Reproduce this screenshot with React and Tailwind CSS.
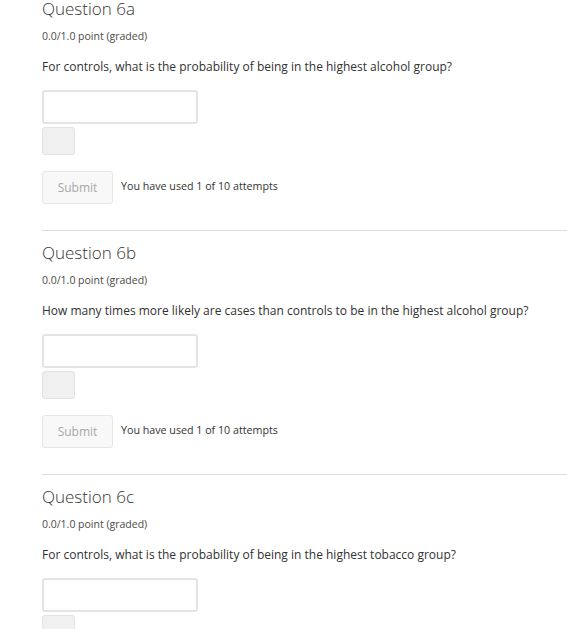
import React from "react";

const questions = [
  { id: "6a", text: "For controls, what is the probability of being in the highest alcohol group?" },
  { id: "6b", text: "How many times more likely are cases than controls to be in the highest alcohol group?" },
  { id: "6c", text: "For controls, what is the probability of being in the highest tobacco group?" },
];

function Problem({ id, text }) {
  return (
    <div className="border-b border-[#dddddd] pb-[26px] mb-[13px]">
      <h3 className="text-[17px] leading-[18px] text-[#363636] font-light">Question {id}</h3>
      <div className="mt-[12px] text-[10.5px] leading-[12px] text-[#4a4a4a]">0.0/1.0 point (graded)</div>
      <p className="mt-[18px] text-[12px] leading-[14px] text-[#313131]">{text}</p>
      <input
        type="text"
        className="block mt-[16px] w-[156px] h-[34px] border-2 border-[#e4e4e4] rounded-[3px] bg-white outline-none"
      />
      <div className="mt-[3px] w-[33px] h-[28px] rounded-[3px] border border-[#e2e2e2] bg-[#f0f0f0]" />
      <div className="mt-[16px] flex items-center gap-[8px]">
        <button
          disabled
          className="w-[71px] h-[33px] rounded-[3px] border border-[#e6e6e6] bg-[#f8f8f8] text-[12px] text-[#a8a8a8]"
        >
          Submit
        </button>
        <span className="text-[10.7px] text-[#333333] -mt-[3px]">You have used 1 of 10 attempts</span>
      </div>
    </div>
  );
}

export default function App() {
  return (
    <div className="min-h-screen bg-white pl-[42px] font-['Open_Sans',sans-serif] overflow-hidden">
      {questions.map((q) => (
        <Problem key={q.id} {...q} />
      ))}
    </div>
  );
}
